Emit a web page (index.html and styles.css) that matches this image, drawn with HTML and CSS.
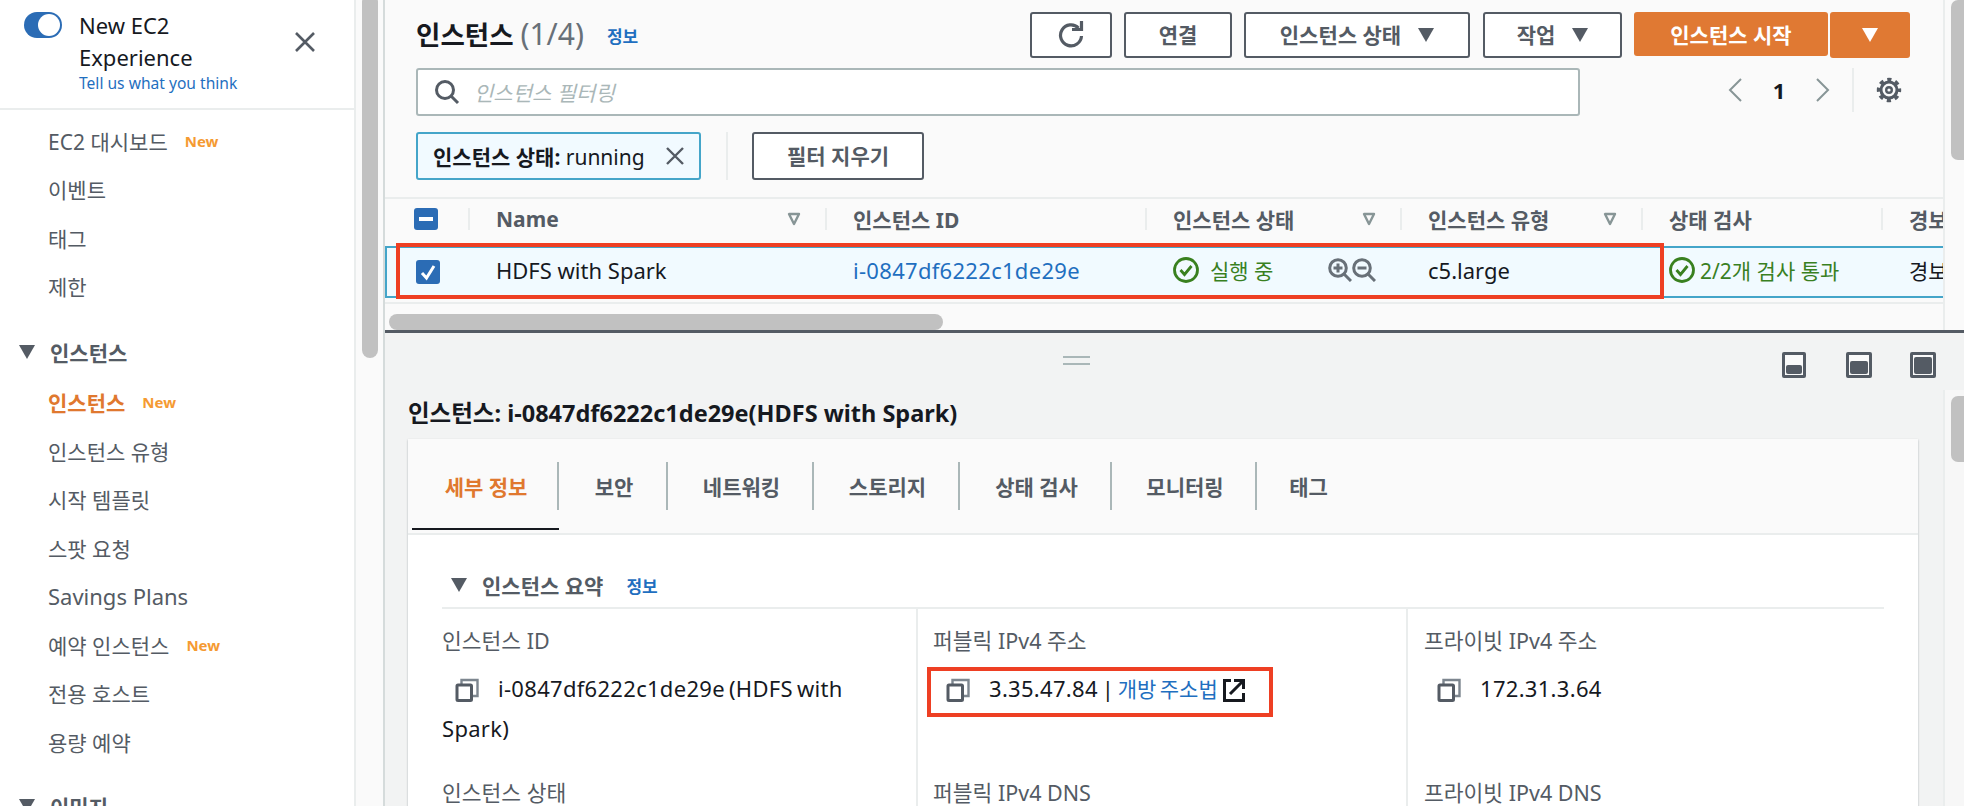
FILE: index.html
```html
<!DOCTYPE html>
<html lang="ko">
  <head>
    <meta charset="UTF-8" />
    <title>인스턴스 | EC2</title>
    <link rel="stylesheet" href="styles.css">
  </head>
  <body>
    <svg class="sprites" width="0" height="0">
      <symbol id="i-copy" viewBox="0 0 24 24">
        <path d="M6.500 6V2h16v16H18" fill="none" stroke="#7d868f" stroke-width="2.400"/>
        <rect x="2" y="7" width="14.500" height="15.500" rx="1" fill="none" stroke="currentColor" stroke-width="3"/>
      </symbol>
      <symbol id="i-sort" viewBox="0 0 14 14">
        <path d="M2 2h10L7 12z" fill="none" stroke="currentColor" stroke-width="2.400" stroke-linejoin="round"/>
      </symbol>
      <symbol id="i-ok" viewBox="0 0 26 26">
        <circle cx="13" cy="13" r="11.500" fill="none" stroke="currentColor" stroke-width="2.800"/>
        <path d="M7.500 13l4 4.500L18.500 9" fill="none" stroke="currentColor" stroke-width="2.800"/>
      </symbol>
    </svg>

    <div class="app">
      <nav class="sidebar">
        <div class="side-top">
          <span class="toggle"></span>
          <div class="side-top-text">
            <div class="exp-title">New EC2 Experience</div>
            <a class="exp-link">Tell us what you think</a>
          </div>
          <svg class="side-close" width="22" height="22" viewBox="0 0 22 22">
            <path d="M2 2l18 18M20 2L2 20" stroke="currentColor" stroke-width="2.600"/>
          </svg>
        </div>
        <ul class="side-list first">
          <li>EC2 대시보드<b class="new">New</b></li>
          <li>이벤트</li>
          <li>태그</li>
          <li>제한</li>
        </ul>
        <div class="side-group"><i class="tri"></i>인스턴스</div>
        <ul class="side-list second">
          <li class="current">인스턴스<b class="new">New</b></li>
          <li>인스턴스 유형</li>
          <li>시작 템플릿</li>
          <li>스팟 요청</li>
          <li class="en">Savings Plans</li>
          <li>예약 인스턴스<b class="new">New</b></li>
          <li>전용 호스트</li>
          <li>용량 예약</li>
        </ul>
        <div class="side-group next"><i class="tri"></i>이미지</div>
      </nav>
      <div class="side-track"><div class="side-thumb"></div></div>

      <main class="main">
        <section class="top-panel">
          <div class="top-content">
            <div class="head-row">
              <h1 class="title">인스턴스 <span class="count">(1/4)</span></h1>
              <a class="info">정보</a>
              <div class="actions">
                <button class="btn btn-refresh">
                  <svg width="28" height="28" viewBox="0 0 28 28">
                    <path d="M21.500 8A10.500 10.500 0 1 0 24.500 16" fill="none" stroke="currentColor" stroke-width="3.200"/>
                    <path d="M15 9.500h9.500V1" fill="none" stroke="currentColor" stroke-width="3.200"/>
                  </svg>
                </button>
                <button class="btn btn-connect">연결</button>
                <button class="btn btn-state">인스턴스 상태<i class="tri"></i></button>
                <button class="btn btn-work">작업<i class="tri"></i></button>
                <button class="btn-primary btn-start">인스턴스 시작</button>
                <button class="btn-primary btn-more"><i class="tri"></i></button>
              </div>
            </div>

            <div class="search-row">
              <div class="search">
                <svg width="26" height="26" viewBox="0 0 26 26">
                  <circle cx="11" cy="11" r="8.500" fill="none" stroke="currentColor" stroke-width="3"/>
                  <path d="M17 17l7 7" stroke="currentColor" stroke-width="3"/>
                </svg>
                <span class="placeholder">인스턴스 필터링</span>
              </div>
              <div class="pager">
                <svg width="16" height="26" viewBox="0 0 16 26"><path d="M14 2L3 13l11 11" fill="none" stroke="currentColor" stroke-width="2"/></svg>
                <span class="page-no">1</span>
                <svg width="16" height="26" viewBox="0 0 16 26"><path d="M2 2l11 11L2 24" fill="none" stroke="currentColor" stroke-width="2"/></svg>
              </div>
              <div class="gear-wrap">
                <svg width="26" height="26" viewBox="0 0 26 26">
                  <circle cx="13" cy="13" r="8" fill="none" stroke="currentColor" stroke-width="3"/>
                  <circle cx="13" cy="13" r="10.500" fill="none" stroke="currentColor" stroke-width="3.400" stroke-dasharray="4.200 4.050" stroke-dashoffset="2.100"/>
                  <circle cx="13" cy="13" r="2.800" fill="none" stroke="currentColor" stroke-width="2.400"/>
                </svg>
              </div>
            </div>

            <div class="filter-row">
              <div class="chip">
                <span><b>인스턴스 상태:</b> running</span>
                <svg width="20" height="20" viewBox="0 0 20 20"><path d="M2 2l16 16M18 2L2 18" stroke="currentColor" stroke-width="2.400"/></svg>
              </div>
              <div class="filter-sep"></div>
              <button class="btn btn-clear">필터 지우기</button>
            </div>

            <div class="table">
              <div class="table-grid thead">
                <div class="cell-check"><span class="check minus"></span></div>
                <div class="th">Name<svg class="sort"><use href="#i-sort"/></svg></div>
                <div class="th">인스턴스 ID</div>
                <div class="th">인스턴스 상태<svg class="sort"><use href="#i-sort"/></svg></div>
                <div class="th">인스턴스 유형<svg class="sort"><use href="#i-sort"/></svg></div>
                <div class="th">상태 검사</div>
                <div class="th">경보 상태</div>
              </div>
              <div class="table-grid tbody">
                <div class="cell-check">
                  <span class="check">
                    <svg width="24" height="24" viewBox="0 0 24 24"><path d="M6 13l4.500 5L18 6" fill="none" stroke="#fff" stroke-width="3"/></svg>
                  </span>
                </div>
                <div class="td en">HDFS with Spark</div>
                <div class="td en"><a class="link num">i-0847df6222c1de29e</a></div>
                <div class="td status">
                  <svg class="ok"><use href="#i-ok"/></svg>
                  <span>실행 중</span>
                  <span class="zooms">
                    <svg width="24" height="24" viewBox="0 0 24 24">
                      <circle cx="10" cy="10" r="8.300" fill="none" stroke="currentColor" stroke-width="3"/>
                      <path d="M16 16l7 7M5.500 10h9M10 5.500v9" stroke="currentColor" stroke-width="3"/>
                    </svg>
                    <svg width="24" height="24" viewBox="0 0 24 24">
                      <circle cx="10" cy="10" r="8.300" fill="none" stroke="currentColor" stroke-width="3"/>
                      <path d="M16 16l7 7M5.500 10h9" stroke="currentColor" stroke-width="3"/>
                    </svg>
                  </span>
                </div>
                <div class="td en">c5.large</div>
                <div class="td status check-status"><svg class="ok"><use href="#i-ok"/></svg><span>2/2개 검사 통과</span></div>
                <div class="td">경보 없음</div>
              </div>
              <div class="hscroll"><div class="hscroll-thumb"></div></div>
            </div>
          </div>
          <div class="main-track"><div class="top-thumb"></div></div>
        </section>

        <section class="lower-panel">
          <div class="lower-head">
            <div class="drag-handle"></div>
            <div class="split-icons">
              <span class="split split-low"></span>
              <span class="split split-mid"></span>
              <span class="split split-full"></span>
            </div>
          </div>
          <div class="lower-body">
            <div class="lower-content">
              <h2 class="detail-title">인스턴스: i-0847df6222c1de29e(HDFS with Spark)</h2>
              <div class="card">
                <div class="tabs">
                  <div class="tab active">세부 정보</div>
                  <div class="tab">보안</div>
                  <div class="tab">네트워킹</div>
                  <div class="tab">스토리지</div>
                  <div class="tab">상태 검사</div>
                  <div class="tab">모니터링</div>
                  <div class="tab last">태그</div>
                </div>
                <div class="summary">
                  <div class="summary-head"><i class="tri"></i><b>인스턴스 요약</b><a class="info">정보</a></div>
                  <div class="summary-grid">
                    <div class="field">
                      <div class="label">인스턴스 ID</div>
                      <div class="value"><svg class="copy"><use href="#i-copy"/></svg><span class="num">i-0847df6222c1de29e (HDFS with Spark)</span></div>
                    </div>
                    <div class="field">
                      <div class="label">퍼블릭 IPv4 주소</div>
                      <div class="value"><svg class="copy"><use href="#i-copy"/></svg><span class="num">3.35.47.84 |</span> <a class="link">개방 주소법</a>
                        <svg class="ext" width="22" height="24" viewBox="0 0 22 24">
                          <path d="M8 2.500H1.500v20h19V15" fill="none" stroke="currentColor" stroke-width="3"/>
                          <path d="M7 16L19 4M11 2.500h9.500V11" fill="none" stroke="currentColor" stroke-width="3"/>
                        </svg>
                      </div>
                    </div>
                    <div class="field">
                      <div class="label">프라이빗 IPv4 주소</div>
                      <div class="value"><svg class="copy"><use href="#i-copy"/></svg><span class="num">172.31.3.64</span></div>
                    </div>
                    <div class="field"><div class="label">인스턴스 상태</div></div>
                    <div class="field"><div class="label">퍼블릭 IPv4 DNS</div></div>
                    <div class="field"><div class="label">프라이빗 IPv4 DNS</div></div>
                  </div>
                </div>
              </div>
            </div>
            <div class="main-track"><div class="low-thumb"></div></div>
          </div>
        </section>
      </main>

      <div class="mark mark-row"></div>
      <div class="mark mark-ip"></div>
    </div>
  </body>
</html>
```

FILE: styles.css
```css
* {
  box-sizing: border-box;
}

body {
  margin: 0;
  color: #16191f;
  font-family: "Noto Sans", "Noto Sans CJK KR", sans-serif;
  font-size: 21px;
}

.sprites {
  position: absolute;
}

.app {
  position: relative;
  display: flex;
  width: 1964px;
  height: 806px;
  overflow: hidden;
  background: #fff;
}

h1, h2, ul {
  margin: 0;
  padding: 0;
}

button {
  font-family: inherit;
  cursor: pointer;
}

.en {
  font-size: 22px;
}

.num {
  font-size: 22px;
  letter-spacing: 0.3px;
}

.tri {
  display: inline-block;
  width: 0;
  height: 0;
  border-left: 8px solid transparent;
  border-right: 8px solid transparent;
  border-top: 14px solid currentColor;
}

/* sidebar */
.sidebar {
  width: 356px;
  flex-shrink: 0;
  border-right: 2px solid #eaeded;
  color: #545b64;
}

.side-top {
  display: flex;
  height: 110px;
  padding: 10px 38px 0 24px;
  border-bottom: 2px solid #eaeded;
}

.toggle {
  position: relative;
  width: 38px;
  height: 26px;
  margin-top: 2px;
  border-radius: 13px;
  background: #2b6cb5;
  flex-shrink: 0;
}

.toggle::after {
  content: "";
  position: absolute;
  right: 2px;
  top: 2px;
  width: 22px;
  height: 22px;
  border-radius: 50%;
  background: #fff;
}

.side-top-text {
  margin-left: 17px;
  width: 180px;
}

.exp-title {
  margin-top: -1px;
  color: #16191f;
  font-size: 22px;
  line-height: 32px;
}

.exp-link {
  display: block;
  color: #1f6fc0;
  font-size: 15.600px;
  line-height: 20px;
  white-space: nowrap;
}

.side-close {
  margin-left: auto;
  margin-top: 21px;
}

.side-list {
  list-style: none;
}

.side-list li {
  display: flex;
  align-items: center;
  height: 48.300px;
  padding-left: 48px;
}

.side-list.first {
  margin-top: 7px;
}

.side-list.second li {
  height: 48.500px;
}

.side-list .current {
  color: #e0782f;
  font-weight: 700;
}

.new {
  margin-left: 17px;
  color: #f59a32;
  font-size: 15px;
  font-weight: 700;
}

.side-group {
  display: flex;
  align-items: center;
  height: 40px;
  margin-top: 22px;
  padding-left: 19px;
  font-weight: 700;
  margin-bottom: 6px;
}

.side-group.next {
  margin-top: 20px;
}

.side-group .tri {
  margin-right: 15px;
}

.side-track {
  width: 29px;
  flex-shrink: 0;
  padding: 0 6px;
  background: #fafafa;
  border-right: 2px solid #d5dbdb;
}

.side-thumb {
  width: 16px;
  height: 364px;
  margin-top: -6px;
  border-radius: 8px;
  background: #c1c1c1;
}

/* main column */
.main {
  flex: 1;
  min-width: 0;
  display: flex;
  flex-direction: column;
}

.top-panel {
  display: flex;
  height: 333px;
  flex-shrink: 0;
  background: #fafafa;
  border-bottom: 3px solid #545b64;
}

.top-content {
  flex: 1;
  min-width: 0;
  padding-top: 12px;
}

.main-track {
  width: 21px;
  flex-shrink: 0;
  padding-left: 6px;
  background: #fafafa;
  border-left: 2px solid #eaeded;
}

.top-thumb {
  width: 14px;
  height: 160px;
  border-radius: 7px 0 0 7px;
  background: #c1c1c1;
}

.low-thumb {
  width: 14px;
  height: 66px;
  margin-top: 6px;
  border-radius: 7px 0 0 7px;
  background: #c1c1c1;
}

.head-row {
  display: flex;
  align-items: center;
  height: 46px;
  padding: 0 33px 0 31px;
}

.title {
  margin-bottom: 4px;
  font-size: 26.500px;
  font-weight: 700;
  white-space: nowrap;
}

.count {
  color: #687078;
  font-size: 30px;
  font-weight: 400;
}

.info {
  color: #1f6fc0;
  font-size: 17px;
  font-weight: 700;
  margin-left: 23px;
}

.actions {
  display: flex;
  margin-left: auto;
  height: 46px;
}

.btn {
  display: flex;
  align-items: center;
  justify-content: center;
  height: 46px;
  padding: 0 0 2px;
  border: 2px solid #545b64;
  border-radius: 3px;
  background: #fff;
  color: #545b64;
  font-size: 21px;
  font-weight: 700;
}

.btn .tri {
  margin-left: 17px;
  margin-top: 2px;
}

.btn-refresh { width: 82px; }
.btn-connect { width: 108px; margin-left: 12px; }
.btn-state { width: 226px; margin-left: 12px; }
.btn-work { width: 139px; margin-left: 13px; }

.btn-primary {
  display: flex;
  align-items: center;
  justify-content: center;
  border: 0;
  border-radius: 3px;
  background: #e07933;
  color: #fff;
  font-size: 21px;
  font-weight: 700;
  padding: 0;
}

.btn-start {
  width: 194px;
  height: 44px;
  margin-left: 12px;
}

.btn-more {
  width: 80px;
  height: 46px;
  margin-left: 2px;
}

.search-row {
  display: flex;
  height: 48px;
  margin-top: 10px;
  padding-left: 31px;
}

.search {
  display: flex;
  align-items: center;
  width: 1164px;
  height: 48px;
  padding-left: 16px;
  border: 2px solid #aab7b8;
  border-radius: 3px;
  background: #fff;
  color: #545b64;
}

.placeholder {
  margin-left: 14px;
  color: #aab7b8;
  font-style: italic;
}

.pager {
  display: flex;
  align-items: center;
  height: 44px;
  margin-left: 147px;
  color: #879596;
}

.page-no {
  width: 72px;
  color: #16191f;
  font-size: 22px;
  font-weight: 700;
  text-align: center;
}

.gear-wrap {
  display: flex;
  align-items: center;
  height: 44px;
  margin-left: 21px;
  padding-left: 22px;
  border-left: 2px solid #eaeded;
  color: #545b64;
}

.filter-row {
  display: flex;
  align-items: center;
  height: 48px;
  margin-top: 16px;
  padding-left: 31px;
}

.chip {
  display: flex;
  align-items: center;
  justify-content: space-between;
  width: 285px;
  height: 48px;
  padding: 0 14px 0 15px;
  border: 2px solid #44a5c9;
  border-radius: 3px;
  background: #f1faff;
  color: #16191f;
  white-space: nowrap;
}

.chip svg {
  color: #545b64;
}

.filter-sep {
  width: 2px;
  height: 48px;
  margin: 0 24px 0 25px;
  background: #eaeded;
}

.btn-clear {
  width: 172px;
  height: 48px;
}

/* table */
.table {
  margin-top: 17px;
  border-top: 2px solid #eaeded;
  overflow: hidden;
}

.table-grid {
  display: grid;
  grid-template-columns: 83px 357px 320px 255px 241px 240px 240px;
  align-items: center;
  width: 1736px;
}

.thead {
  height: 47px;
  padding-bottom: 8px;
}

.tbody {
  height: 52px;
  width: 100%;
  padding-bottom: 4px;
  background: #f1faff;
  box-shadow: inset 0 2px #44a5c9, inset 0 -2px #44a5c9, inset 2px 0 #44a5c9;
  grid-template-columns: 83px 357px 320px 255px 241px 240px 62px;
}

.cell-check {
  padding-left: 29px;
  display: flex;
}

.check {
  display: block;
  width: 24px;
  height: 24px;
  border-radius: 3px;
  background: #2b6cb5;
}

.check.minus {
  position: relative;
  height: 22px;
}

.check.minus::after {
  content: "";
  position: absolute;
  left: 5px;
  right: 5px;
  top: 9px;
  height: 4px;
  background: #fff;
}

.tbody .cell-check {
  padding-left: 31px;
  margin-top: 4px;
}

.th {
  display: flex;
  align-items: center;
  justify-content: space-between;
  height: 22px;
  padding: 0 24px 0 26px;
  border-left: 2px solid #eaeded;
  color: #545b64;
  font-weight: 700;
  white-space: nowrap;
}

.sort {
  width: 14px;
  height: 14px;
  color: #879596;
}

.td {
  padding-left: 28px;
  white-space: nowrap;
  overflow: hidden;
}

.link {
  color: #1f6fc0;
}

.status {
  display: flex;
  align-items: center;
  color: #39801f;
}

.ok {
  width: 26px;
  height: 26px;
  margin-right: 11px;
  flex-shrink: 0;
}

.zooms {
  display: flex;
  margin-left: auto;
  margin-right: 24px;
  color: #687078;
}

.check-status .ok {
  margin-right: 5px;
}

.hscroll {
  height: 30px;
  padding: 10px 0 0 4px;
  border-top: 2px solid #eaeded;
  margin-top: 4px;
}

.hscroll-thumb {
  width: 554px;
  height: 16px;
  border-radius: 8px;
  background: #c1c1c1;
}

/* lower panel */
.lower-panel {
  flex: 1;
  min-height: 0;
  background: #f2f3f3;
}

.lower-head {
  display: flex;
  height: 57px;
  padding-right: 28px;
}

.drag-handle {
  width: 27px;
  height: 9px;
  margin: 23px 0 0 678px;
  border-top: 2px solid #aab7b8;
  border-bottom: 2px solid #aab7b8;
}

.split-icons {
  display: flex;
  margin: 19px 0 0 auto;
}

.split {
  position: relative;
  width: 26px;
  height: 26px;
  margin-left: 38px;
  border: 3px solid #545b64;
  border-radius: 2px;
  background: #fafafa;
}

.split::after {
  content: "";
  position: absolute;
  left: 1px;
  right: 1px;
  bottom: 1px;
  border-radius: 2px;
  background: #545b64;
}

.split-low { width: 24px; margin-right: 2px; }
.split-low::after { height: 9px; }
.split-mid::after { height: 13px; }
.split-full::after { height: 17px; }

.lower-body {
  display: flex;
  height: 416px;
}

.lower-body .main-track {
  background: #f7f7f7;
}

.lower-content {
  flex: 1;
  min-width: 0;
  padding: 8px 25px 0 23px;
}

.detail-title {
  font-size: 23.500px;
  font-weight: 700;
  line-height: 30px;
  margin-bottom: 11px;
  white-space: nowrap;
}

.card {
  height: 400px;
  background: #fff;
  box-shadow: 0 1px 2px rgba(0, 28, 36, 0.3);
}

.tabs {
  display: grid;
  grid-template-columns: 147px 109px 146px 146px 152px 145px 100px;
  height: 96px;
  padding: 23px 0 0 4px;
  background: #fafafa;
  border-bottom: 2px solid #eaeded;
}

.tab {
  position: relative;
  display: flex;
  align-items: center;
  justify-content: center;
  height: 48px;
  padding-left: 3px;
  border-right: 2px solid #aab7b8;
  color: #545b64;
  font-weight: 700;
}

.tab.last {
  border-right: 0;
}

.tab.active {
  color: #e0782f;
}

.tab.active::after {
  content: "";
  position: absolute;
  left: 0;
  right: -2px;
  bottom: -20px;
  height: 2px;
  background: #16191f;
}

.summary {
  padding: 36px 34px 0;
}

.summary-head {
  display: flex;
  align-items: center;
  height: 38px;
  padding: 0 0 8px 9px;
  border-bottom: 2px solid #eaeded;
  color: #545b64;
}

.summary-head .tri {
  margin-right: 15px;
}

.summary-grid {
  display: grid;
  grid-template-columns: 474px 490px 476px;
  grid-template-rows: 152px auto;
}

.field {
  padding: 18px 30px 0 15px;
  border-left: 2px solid #eaeded;
}

.field:nth-child(3n+1) {
  padding-left: 0;
  border-left: 0;
}

.field:nth-child(3n) {
  padding-left: 16px;
}

.label {
  color: #545b64;
  font-size: 21.500px;
  line-height: 28px;
}

.value {
  margin-top: 14px;
  line-height: 39px;
  word-spacing: -2px;
}

.copy {
  width: 24px;
  height: 24px;
  margin: 0 19px 0 13px;
  color: #545b64;
  vertical-align: -5px;
}

.ext {
  margin-left: 2px;
  vertical-align: -5px;
}

/* red annotation boxes drawn on top of the shot */
.mark {
  position: absolute;
  border: 4px solid #ee3f23;
  pointer-events: none;
}

.mark-row {
  left: 396px;
  top: 243px;
  width: 1268px;
  height: 56px;
}

.mark-ip {
  left: 927px;
  top: 667px;
  width: 346px;
  height: 50px;
}
```
